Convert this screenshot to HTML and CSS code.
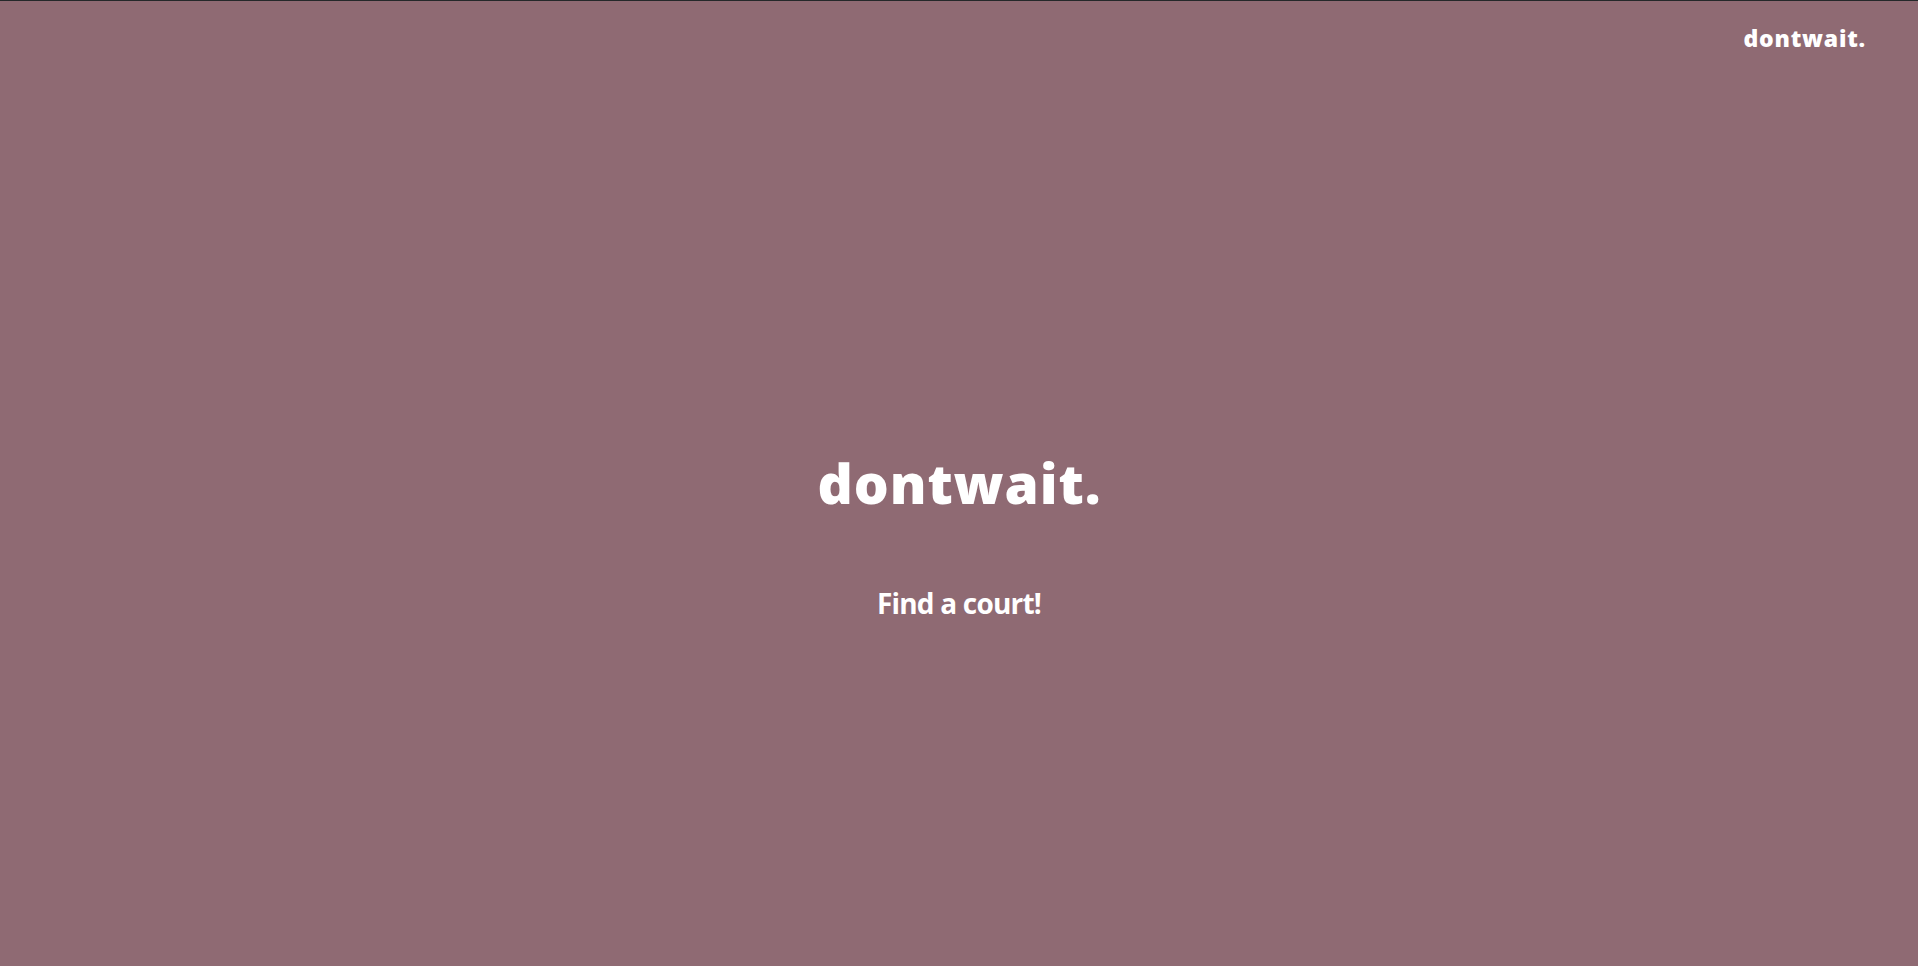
FILE: index.html
```html
<!DOCTYPE html>
<html lang="en">
<head>
<meta charset="utf-8">
<title>dontwait.</title>
<link rel="stylesheet" href="styles.css">
</head>
<body>
<div class="page">
  <header class="topbar">
    <a class="brand-small" href="#">dontwait.</a>
  </header>
  <main class="hero">
    <h1 class="brand-large">dontwait.</h1>
    <a class="cta" href="#">Find a court!</a>
  </main>
</div>
</body>
</html>
```
FILE: styles.css
```css
html, body {
  margin: 0;
  padding: 0;
  height: 100%;
}
body {
  background: #8f6a73;
  font-family: "Open Sans", "Noto Sans", sans-serif;
  color: #ffffff;
}
.page {
  border-top: 1px solid #25282a;
  height: 965px;
  display: flex;
  flex-direction: column;
}
.topbar {
  display: flex;
  justify-content: flex-end;
  padding: 22px 52px 0 0;
}
.brand-small {
  color: #fff;
  text-decoration: none;
  font-weight: 800;
  font-size: 23px;
  line-height: 30px;
  letter-spacing: 0.8px;
}
.hero {
  display: flex;
  flex-direction: column;
  align-items: center;
  padding-top: 400px;
}
.brand-large {
  margin: 0;
  padding-left: 1px;
  font-weight: 800;
  font-size: 55px;
  line-height: 60px;
  letter-spacing: 0.9px;
}
.cta {
  margin-top: 73px;
  color: #fff;
  text-decoration: none;
  font-weight: 700;
  font-size: 28px;
  line-height: 34px;
  letter-spacing: -0.8px;
}
```
